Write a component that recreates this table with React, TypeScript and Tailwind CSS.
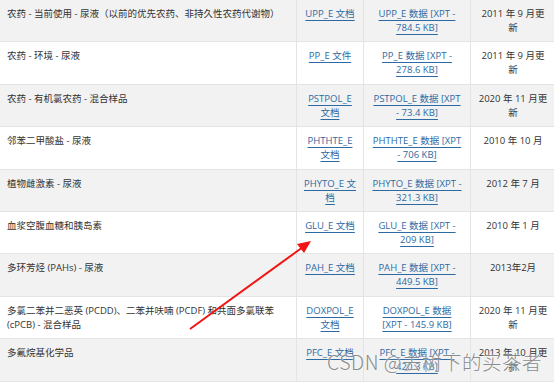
import React from 'react';

type Row = {
  name: string;
  doc: string;
  data: string;
  date: string;
};

const rows: Row[] = [
  {
    name: '农药 - 当前使用 - 尿液（以前的优先农药、非持久性农药代谢物）',
    doc: 'UPP_E 文档',
    data: 'UPP_E 数据 [XPT - 784.5 KB]',
    date: '2011 年 9 月更新',
  },
  { name: '农药 - 环境 - 尿液', doc: 'PP_E 文件', data: 'PP_E 数据 [XPT - 278.6 KB]', date: '2011 年 9 月更新' },
  {
    name: '农药 - 有机氯农药 - 混合样品',
    doc: 'PSTPOL_E 文档',
    data: 'PSTPOL_E 数据 [XPT - 73.4 KB]',
    date: '2020 年 11 月更新',
  },
  { name: '邻苯二甲酸盐 - 尿液', doc: 'PHTHTE_E 文档', data: 'PHTHTE_E 数据 [XPT - 706 KB]', date: '2010 年 10 月' },
  { name: '植物雌激素 - 尿液', doc: 'PHYTO_E 文档', data: 'PHYTO_E 数据 [XPT - 321.3 KB]', date: '2012 年 7 月' },
  { name: '血浆空腹血糖和胰岛素', doc: 'GLU_E 文档', data: 'GLU_E 数据 [XPT - 209 KB]', date: '2010 年 1 月' },
  { name: '多环芳烃 (PAHs) - 尿液', doc: 'PAH_E 文档', data: 'PAH_E 数据 [XPT - 449.5 KB]', date: '2013年2月' },
  {
    name: '多氯二苯并二恶英 (PCDD)、二苯并呋喃 (PCDF) 和共面多氯联苯 (cPCB) - 混合样品',
    doc: 'DOXPOL_E 文档',
    data: 'DOXPOL_E 数据 [XPT - 145.9 KB]',
    date: '2020 年 11 月更新',
  },
  { name: '多氟烷基化学品', doc: 'PFC_E 文档', data: 'PFC_E 数据 [XPT - 420.3 KB]', date: '2013 年 10 月更新' },
];

const cell = 'border border-[#e4e4e4] align-top pt-[7px] pb-[6.4px] leading-[14px]';
const link = 'text-[#2d6aa3] underline underline-offset-[2.5px] decoration-[0.8px]';

export default function App() {
  return (
    <div className="relative w-[554px] h-[382px] overflow-hidden bg-white font-['Open_Sans','Noto_Sans_CJK_SC',sans-serif] text-[9.5px] text-[#333]">
      <table className="table-fixed border-collapse w-[556px] -mt-px -ml-px">
        <colgroup>
          <col className="w-[297px]" />
          <col className="w-[67px]" />
          <col className="w-[107px]" />
          <col className="w-[85px]" />
        </colgroup>
        <tbody>
          {rows.map((r, i) => (
            <tr key={r.doc} className={i % 2 === 0 ? 'bg-[#f2f2f2]' : 'bg-white'}>
              <td className={`${cell} pl-[7px] pr-[6px] text-left`}>{r.name}</td>
              <td className={`${cell} px-[6px] text-center`}>
                <a className={link}>{r.doc}</a>
              </td>
              <td className={`${cell} px-[8px] text-center`}>
                <a className={link}>{r.data}</a>
              </td>
              <td className={`${cell} px-[7px] text-center`}>{r.date}</td>
            </tr>
          ))}
        </tbody>
      </table>

      {/* annotation arrow */}
      <svg className="absolute left-0 top-0 pointer-events-none" width="554" height="382">
        <line x1="190" y1="329" x2="303" y2="247" stroke="#f01414" strokeWidth="2" />
        <polygon points="311,241 297,244 304,253" fill="#f01414" />
      </svg>

      {/* watermark */}
      <div className="absolute left-[327px] top-[350px] text-[19.5px] leading-[24px] tracking-[0.5px] font-light text-[#8a8a8a] font-['Noto_Sans_CJK_SC',sans-serif] [text-shadow:0_0_2px_#fff] whitespace-nowrap">
        CSDN @去树下的买茶者
      </div>
    </div>
  );
}
